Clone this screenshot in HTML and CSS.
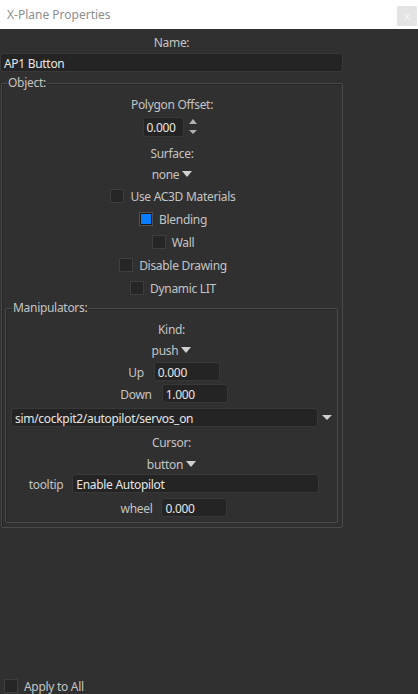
FILE: index.html
```html
<!DOCTYPE html>
<html>
<head>
<meta charset="utf-8">
<link rel="stylesheet" href="styles.css">
</head>
<body>
<div class="window">
  <div class="titlebar">
    <span class="title">X-Plane Properties</span>
    <span class="close">x</span>
  </div>
  <div class="panel">
    <div class="form">
      <div class="row name-label">Name:</div>
      <div class="input name-input">AP1 Button</div>
      <div class="group object">
        <span class="legend">Object:</span>
        <div class="row poly-label">Polygon Offset:</div>
        <div class="spin-row">
          <div class="input spin-input">0.000</div>
          <div class="spin-arrows"><span class="tri-up"></span><span class="tri-down"></span></div>
        </div>
        <div class="row surface-label">Surface:</div>
        <div class="row combo surface-combo">none<span class="caret"></span></div>
        <div class="checks">
          <div class="check-row"><span class="box"></span><span class="lbl">Use AC3D Materials</span></div>
          <div class="check-row"><span class="box checked"></span><span class="lbl">Blending</span></div>
          <div class="check-row"><span class="box"></span><span class="lbl">Wall</span></div>
          <div class="check-row"><span class="box"></span><span class="lbl">Disable Drawing</span></div>
          <div class="check-row"><span class="box"></span><span class="lbl">Dynamic LIT</span></div>
        </div>
        <div class="group manip">
          <span class="legend">Manipulators:</span>
          <div class="row kind-label">Kind:</div>
          <div class="row combo kind-combo">push<span class="caret"></span></div>
          <div class="field-row up-row"><span class="flabel">Up</span><div class="input small-input">0.000</div></div>
          <div class="field-row down-row"><span class="flabel">Down</span><div class="input small-input">1.000</div></div>
          <div class="dataref-row"><div class="input dataref-input">sim/cockpit2/autopilot/servos_on</div><span class="caret dataref-caret"></span></div>
          <div class="row cursor-label">Cursor:</div>
          <div class="row combo cursor-combo">button<span class="caret"></span></div>
          <div class="field-row tooltip-row"><span class="flabel">tooltip</span><div class="input tooltip-input">Enable Autopilot</div></div>
          <div class="field-row wheel-row"><span class="flabel">wheel</span><div class="input small-input">0.000</div></div>
        </div>
      </div>
    </div>
    <div class="apply-row"><span class="box"></span><span class="lbl">Apply to All</span></div>
  </div>
</div>
</body>
</html>
```

FILE: styles.css
```css
* { box-sizing: border-box; }
html, body {
  margin: 0;
  padding: 0;
  width: 418px;
  height: 694px;
  overflow: hidden;
  background: #303030;
  font-family: "Noto Sans", "Open Sans", sans-serif;
  font-size: 12px;
  letter-spacing: -0.3px;
  color: #c4c4c4;
}
.window {
  width: 418px;
  height: 694px;
  display: flex;
  flex-direction: column;
}
.titlebar {
  height: 29px;
  background: #ffffff;
  display: flex;
  align-items: center;
  justify-content: space-between;
  padding-left: 7px;
  padding-right: 1px;
}
.title {
  color: #8e8e8e;
  font-size: 12px;
  letter-spacing: 0;
}
.close {
  width: 20px;
  height: 20px;
  background: #e4e4e4;
  color: #f6f6f6;
  font-size: 11px;
  display: flex;
  align-items: center;
  justify-content: center;
  margin-top: 2px;
}
.panel {
  flex: 1;
  display: flex;
  flex-direction: column;
}
.form {
  width: 343px;
  display: flex;
  flex-direction: column;
}
.row {
  height: 18px;
  line-height: 15px;
  padding-top: 3px;
  text-align: center;
  display: flex;
  justify-content: center;
  align-items: center;
}
.name-label { margin-top: 3px; }
.input {
  background: #242424;
  border: 1px solid #383838;
  border-radius: 3px;
  color: #e6e6e6;
  height: 19px;
  line-height: 15px;
  padding-top: 2px;
  padding-left: 3px;
  white-space: nowrap;
  overflow: hidden;
}
.name-input {
  margin-top: 3px;
  width: 343px;
}
.group {
  position: relative;
  border: 1px solid #4a4a4a;
  border-radius: 2px;
  box-shadow: inset 1px 1px 0 #262626;
}
.legend {
  position: absolute;
  top: -9px;
  left: 5px;
  padding: 0 1px;
  background: #303030;
  line-height: 16px;
  color: #c4c4c4;
}
.object {
  margin-top: 11px;
  margin-left: 1px;
  width: 342px;
  padding-top: 10px;
  padding-bottom: 4px;
  display: flex;
  flex-direction: column;
}
.spin-row {
  margin-top: 5px;
  height: 20px;
  display: flex;
  justify-content: center;
  align-items: center;
  padding-right: 4px;
}
.spin-input {
  width: 41px;
  height: 20px;
  line-height: 16px;
}
.spin-arrows {
  width: 14px;
  height: 20px;
  display: flex;
  flex-direction: column;
  justify-content: space-between;
  align-items: center;
  padding: 2px 0 3px 5px;
}
.tri-up {
  width: 0; height: 0;
  border-left: 4px solid transparent;
  border-right: 4px solid transparent;
  border-bottom: 5px solid #b0b0b0;
}
.tri-down {
  width: 0; height: 0;
  border-left: 4px solid transparent;
  border-right: 4px solid transparent;
  border-top: 4px solid #b0b0b0;
}
.surface-label { margin-top: 6px; }
.combo { margin-top: 3px; }
.caret {
  display: inline-block;
  width: 0; height: 0;
  border-left: 5px solid transparent;
  border-right: 5px solid transparent;
  border-top: 6px solid #d0d0d0;
  margin-left: 3px;
  margin-bottom: 2px;
}
.checks {
  margin-top: 2px;
  display: flex;
  flex-direction: column;
}
.check-row {
  height: 23px;
  display: flex;
  justify-content: center;
  align-items: center;
  gap: 6px;
  padding-left: 2px;
}
.lbl {
  padding-top: 2px;
  line-height: 16px;
}
.box {
  width: 14px;
  height: 14px;
  background: #262626;
  border: 1px solid #3e3e3e;
  display: inline-block;
}
.box.checked {
  background: #0a7cff;
  border: 1px solid #505050;
  box-shadow: inset 0 0 0 1px #1a1a1a;
}
.manip {
  margin-top: 9px;
  margin-left: 3px;
  width: 333px;
  padding-top: 10px;
  padding-bottom: 5px;
  display: flex;
  flex-direction: column;
}
.manip .legend { left: 6px; }
.field-row {
  height: 19px;
  display: flex;
  justify-content: center;
  align-items: center;
  gap: 10px;
  padding-left: 5px;
}
.flabel {
  padding-top: 2px;
  line-height: 16px;
}
.small-input { width: 66px; }
.up-row { margin-top: 4px; }
.down-row { margin-top: 3px; }
.dataref-row {
  margin-top: 5px;
  margin-left: 5px;
  height: 19px;
  display: flex;
  align-items: center;
}
.dataref-input { width: 307px; }
.dataref-caret { margin-left: 4px; margin-bottom: 0; border-top-width: 5px; }
.cursor-label { margin-top: 5px; }
.cursor-combo { margin-top: 4px; }
.tooltip-row { margin-top: 2px; gap: 9px; }
.tooltip-input { width: 247px; }
.wheel-row { margin-top: 5px; gap: 9px; }
.apply-row {
  margin-top: auto;
  height: 19px;
  display: flex;
  align-items: center;
  gap: 6px;
  padding-left: 4px;
  padding-top: 2px;
}
.apply-row .lbl { padding-top: 3px; }
```
